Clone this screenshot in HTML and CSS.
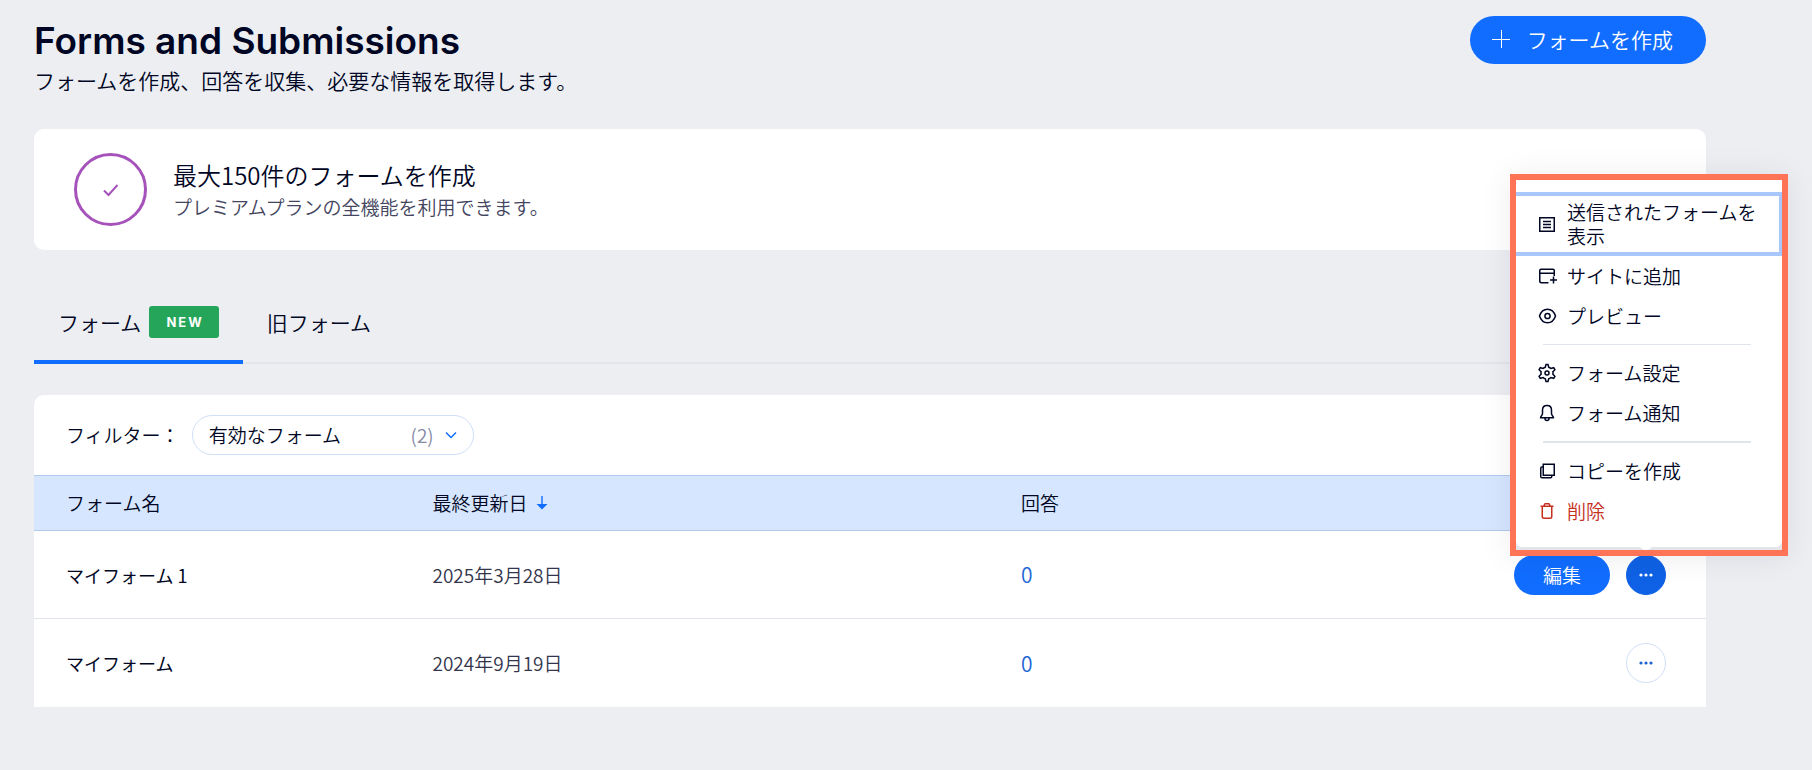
FILE: index.html
```html
<!DOCTYPE html>
<html lang="ja">
<head>
<meta charset="utf-8">
<meta name="viewport" content="width=device-width, initial-scale=1">
<title>Forms and Submissions</title>
<link rel="stylesheet" href="styles.css">
</head>
<body>
<main class="page">
  <header class="page-header">
    <div>
      <h1 class="page-title">Forms and Submissions</h1>
      <p class="page-subtitle">フォームを作成、回答を収集、必要な情報を取得します。</p>
    </div>
    <button class="btn btn-create" type="button">
      <svg class="plus" width="18" height="18" viewBox="0 0 18 18" aria-hidden="true"><path d="M9.500 0v18M0 9.500h18"/></svg>
      フォームを作成
    </button>
  </header>

  <section class="plan-card">
    <span class="plan-ring">
      <svg width="16" height="14" viewBox="0 0 16 14" aria-hidden="true"><path d="M1 7.500l4.500 4.500L14.500 2"/></svg>
    </span>
    <div>
      <h2 class="plan-title">最大150件のフォームを作成</h2>
      <p class="plan-text">プレミアムプランの全機能を利用できます。</p>
    </div>
  </section>

  <nav class="tabs">
    <button class="tab tab-active" type="button">フォーム<span class="badge">NEW</span></button>
    <button class="tab" type="button">旧フォーム</button>
  </nav>

  <section class="forms-card">
    <div class="filter-bar">
      <label for="filter">フィルター：</label>
      <div class="filter">
        <select id="filter" class="filter-select"><option>有効なフォーム</option></select>
        <span class="filter-extra">(2)
          <svg width="12" height="8" viewBox="0 0 12 8" aria-hidden="true"><path d="M1 1.500l5 5 5-5"/></svg>
        </span>
      </div>
    </div>
    <table class="forms-table">
      <thead>
        <tr>
          <th class="col-name">フォーム名</th>
          <th class="col-date"><span class="sort">最終更新日
            <svg width="12" height="14" viewBox="0 0 12 14" aria-hidden="true"><path class="stem" d="M6 0v9"/><path class="head" d="M.500 8h11L6 13.500z"/></svg></span></th>
          <th>回答</th>
          <th></th>
        </tr>
      </thead>
      <tbody>
        <tr>
          <td class="name">マイフォーム 1</td>
          <td>2025年3月28日</td>
          <td><a class="count" href="#">0</a></td>
          <td>
            <div class="actions">
              <button class="btn btn-edit" type="button">編集</button>
              <div class="more-wrap">
                <button class="btn-more btn-more-open" type="button" aria-label="その他" aria-expanded="true">
                  <svg width="14" height="4" viewBox="0 0 14 4" aria-hidden="true"><circle cx="2" cy="2" r="1.600"/><circle cx="7" cy="2" r="1.600"/><circle cx="12" cy="2" r="1.600"/></svg>
                </button>
                <div class="callout">
                  <div class="menu" role="menu">
                    <button class="item item-focus" type="button" role="menuitem">
                      <svg class="icon" viewBox="0 0 20 20" aria-hidden="true"><path d="M2.750 3.750h14.500v13.500H2.750zM6 7.500h8M6 10.500h8M6 13.500h8"/></svg>
                      <span>送信されたフォームを表示</span>
                    </button>
                    <button class="item" type="button" role="menuitem">
                      <svg class="icon" viewBox="0 0 20 20" aria-hidden="true"><path d="M11.500 16.750h-7q-1.750 0-1.750-1.750V4.500q0-1.250 1.250-1.250h12q1.250 0 1.250 1.250V10M2.750 7.250h14.500M16.500 10.500v7M13 14h7"/></svg>
                      <span>サイトに追加</span>
                    </button>
                    <button class="item" type="button" role="menuitem">
                      <svg class="icon" viewBox="0 0 20 20" aria-hidden="true"><path d="M2.500 10C4 5.500 7 3.200 10.500 3.200S17 5.500 18.500 10c-1.500 4.500-4.500 6.800-8 6.800S4 14.500 2.500 10z"/><circle cx="10.500" cy="10" r="2.600"/></svg>
                      <span>プレビュー</span>
                    </button>
                    <hr class="rule">
                    <button class="item" type="button" role="menuitem">
                      <svg class="icon" viewBox="0 0 20 20" aria-hidden="true"><path d="M8.300 4.200L9 1.600h2l.700 2.600q1.300.400 2.200 1.300l2.800-.800 1.200 2-2 2.100q.300 1.200 0 2.400l2 2.100-1.200 2-2.800-.800q-.900.900-2.200 1.300L11 18.400H9l-.700-2.600q-1.300-.400-2.200-1.300l-2.800.800-1.200-2 2-2.100q-.300-1.200 0-2.400l-2-2.100 1.200-2 2.800.800q.900-.900 2.200-1.300z"/><circle cx="10" cy="10" r="2"/></svg>
                      <span>フォーム設定</span>
                    </button>
                    <button class="item" type="button" role="menuitem">
                      <svg class="icon" viewBox="0 0 20 20" aria-hidden="true"><path d="M10 2.600c-2.900 0-4.500 2-4.500 4.700v3.500c0 1.600-1.900 2.200-1.900 3.900h12.800c0-1.700-1.900-2.300-1.900-3.900V7.300c0-2.700-1.600-4.700-4.500-4.700zM8 15v.500a2 2 0 0 0 4 0V15"/></svg>
                      <span>フォーム通知</span>
                    </button>
                    <hr class="rule rule-strong">
                    <button class="item" type="button" role="menuitem">
                      <svg class="icon" viewBox="0 0 20 20" aria-hidden="true"><path d="M6.250 3.250h11v11h-11zM6 6H5q-1.250 0-1.250 1.250v8.250q0 1.250 1.250 1.250h8.500q1.250 0 1.250-1.250v-1"/></svg>
                      <span>コピーを作成</span>
                    </button>
                    <button class="item item-danger" type="button" role="menuitem">
                      <svg class="icon" viewBox="0 0 20 20" aria-hidden="true"><path d="M3.500 5.250h13M7.250 5V4q0-1.250 1.250-1.250h3q1.250 0 1.250 1.250v1M5.250 5.500v10q0 1.750 1.750 1.750h6q1.750 0 1.750-1.750v-10"/></svg>
                      <span>削除</span>
                    </button>
                  </div>
                </div>
              </div>
            </div>
          </td>
        </tr>
        <tr>
          <td class="name">マイフォーム</td>
          <td>2024年9月19日</td>
          <td><a class="count" href="#">0</a></td>
          <td>
            <div class="actions">
              <button class="btn-more" type="button" aria-label="その他">
                <svg width="14" height="4" viewBox="0 0 14 4" aria-hidden="true"><circle cx="2" cy="2" r="1.600"/><circle cx="7" cy="2" r="1.600"/><circle cx="12" cy="2" r="1.600"/></svg>
              </button>
            </div>
          </td>
        </tr>
      </tbody>
    </table>
  </section>
</main>
</body>
</html>
```

FILE: styles.css
```css
* {
  box-sizing: border-box;
}

body {
  margin: 0;
  background: #eceef2;
  color: #000624;
  font-family: "Noto Sans CJK JP", sans-serif;
  font-size: 19px;
  font-weight: 350;
  line-height: 24px;
}

h1, h2, p {
  margin: 0;
}

button, select {
  font: inherit;
  color: inherit;
  cursor: pointer;
}

svg {
  fill: none;
  stroke: currentColor;
  flex: none;
}

.page {
  padding: 16px 106px 62px 34px;
}

.page-header {
  display: flex;
  justify-content: space-between;
  align-items: flex-start;
  margin-bottom: 35px;
}

.page-title {
  font-family: Inter, sans-serif;
  font-size: 37px;
  font-weight: 600;
  line-height: 50px;
}

.page-subtitle {
  font-size: 21px;
  line-height: 28px;
}

.btn {
  display: flex;
  align-items: center;
  justify-content: center;
  border: 0;
  border-radius: 24px;
  background: #116dff;
  color: #fff;
}

.btn-create {
  height: 48px;
  padding: 0 33px 2px 22px;
  gap: 17px;
  font-size: 21px;
}

.plan-card {
  display: flex;
  align-items: center;
  gap: 26px;
  min-height: 121px;
  padding: 24px 40px;
  border-radius: 10px;
  background: #fff;
}

.plan-ring {
  display: flex;
  align-items: center;
  justify-content: center;
  width: 73px;
  height: 73px;
  border: 3px solid #a652bb;
  border-radius: 50%;
  color: #a652bb;
}

.plan-ring svg {
  stroke-width: 2;
}

.plan-title {
  font-size: 24px;
  font-weight: 350;
  line-height: 36px;
}

.plan-text {
  padding-bottom: 2px;
  color: #43455e;
  line-height: 28px;
}

.tabs {
  display: flex;
  margin-top: 34px;
  box-shadow: inset 0 -2px #e2e5ec;
}

.tab {
  display: flex;
  align-items: center;
  gap: 8px;
  height: 80px;
  padding: 0 24px;
  border: 0;
  border-bottom: 4px solid transparent;
  background: none;
  font-size: 21px;
}

.tab-active {
  border-bottom-color: #116dff;
}

.badge {
  padding: 0 15px 0 17px;
  border-radius: 3px;
  background: #25a55a;
  color: #fff;
  font-family: Inter, sans-serif;
  font-size: 13px;
  font-weight: 700;
  letter-spacing: 2px;
  line-height: 32px;
}

.forms-card {
  margin-top: 31px;
  border-radius: 10px 10px 0 0;
  background: #fff;
}

.filter-bar {
  display: flex;
  align-items: center;
  gap: 12px;
  padding: 20px 32px;
}

.filter {
  display: grid;
  align-items: center;
  width: 282px;
}

.filter-select,
.filter-extra {
  grid-area: 1 / 1;
}

.filter-select {
  height: 40px;
  padding: 0 80px 0 16px;
  border: 1px solid #d0dff8;
  border-radius: 20px;
  background: #fff;
  appearance: none;
}

.filter-extra {
  display: flex;
  align-items: center;
  justify-self: end;
  gap: 11px;
  padding-right: 17px;
  color: #868aa5;
  pointer-events: none;
}

.filter-extra svg {
  color: #116dff;
  stroke-width: 1.5;
}

.forms-table {
  width: 100%;
  border-collapse: separate;
  border-spacing: 0;
  table-layout: fixed;
}

.col-name {
  width: 21.8%;
}

.col-date {
  width: 35.2%;
}

.forms-table th {
  height: 56px;
  padding: 0 0 0 34px;
  border: solid #b0c9ee;
  border-width: 1px 0;
  background: #d6e6ff;
  font-weight: 350;
  text-align: left;
}

.forms-table td {
  height: 88px;
  padding: 0 40px 0 34px;
  border-bottom: 1px solid #dfe3eb;
  color: #33354d;
}

.forms-table tr > :first-child {
  padding-left: 32px;
}

.forms-table tr:last-child td {
  border-bottom: 0;
}

.forms-table .name {
  color: #000624;
  font-size: 18px;
  font-weight: 400;
}

.sort {
  display: flex;
  align-items: center;
  gap: 8px;
}

.sort .stem {
  stroke: #4d90ff;
  stroke-width: 2;
}

.sort .head {
  fill: #116dff;
  stroke: none;
}

.count {
  color: #1f66d6;
  font-size: 21px;
  text-decoration: none;
}

.actions {
  display: flex;
  justify-content: flex-end;
  gap: 16px;
}

.btn-edit {
  width: 96px;
  height: 40px;
}

.more-wrap {
  position: relative;
}

.btn-more {
  display: flex;
  align-items: center;
  justify-content: center;
  width: 40px;
  height: 40px;
  padding: 0;
  border: 1px solid #d0dff8;
  border-radius: 50%;
  background: #fff;
  color: #1a62cf;
}

.btn-more svg {
  fill: currentColor;
  stroke: none;
}

.btn-more-open {
  border-color: #0f62e6;
  background: #0f62e6;
  color: #fff;
}

.callout {
  position: absolute;
  right: -122px;
  bottom: 39px;
  width: 278px;
  padding-bottom: 3px;
  border: 6px solid #ff7357;
  background: #e3e5ea;
  box-shadow: 0 2px 30px rgba(0, 6, 36, 0.08);
}

.menu {
  position: relative;
  padding: 12px 0 16px;
  border-radius: 0 0 6px 6px;
  background: #fff;
}

.menu::after {
  content: "";
  position: absolute;
  right: 129px;
  bottom: -3px;
  width: 14px;
  height: 8px;
  border-radius: 0 0 7px 7px;
  background: #fff;
}

.item {
  display: flex;
  align-items: center;
  gap: 10px;
  width: 100%;
  min-height: 40px;
  padding: 0 20px 0 21px;
  border: 0;
  background: none;
  color: #000624;
  text-align: left;
}

.item-focus {
  min-height: 64px;
  padding-right: 17px;
  border: solid #a8c8fb;
  border-width: 4px 3px 4px 0;
}

.item-danger {
  color: #c6301f;
}

.icon {
  width: 20px;
  height: 20px;
  stroke-width: 1.5;
}

.rule {
  height: 1px;
  margin: 8px 31px 8px 27px;
  border: 0;
  background: #dfe5eb;
}

.rule-strong {
  height: 2px;
}
```
